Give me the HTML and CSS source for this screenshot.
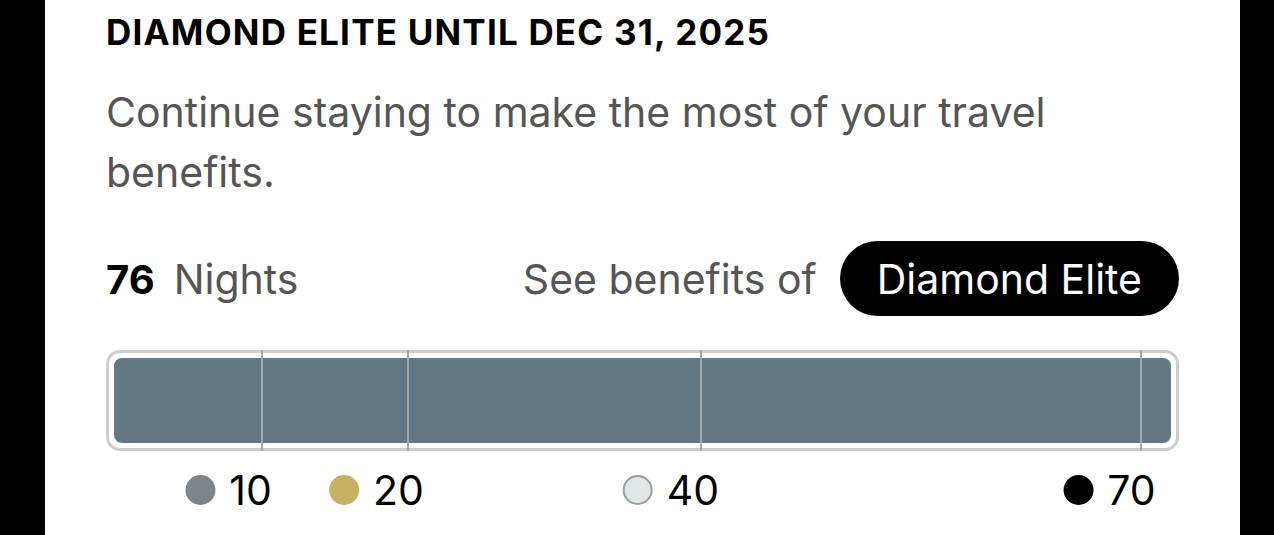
FILE: index.html
```html
<!DOCTYPE html>
<html lang="en">
<head>
<meta charset="utf-8">
<title>Diamond Elite</title>
<link rel="stylesheet" href="styles.css">
</head>
<body>
<main class="panel">
  <h1 class="status-title">DIAMOND ELITE UNTIL DEC 31, 2025</h1>
  <p class="status-text">Continue staying to make the most of your travel benefits.</p>
  <div class="nights-row">
    <div class="nights"><span class="nights-count">76</span><span class="nights-label">Nights</span></div>
    <div class="benefits">
      <span class="benefits-label">See benefits of</span>
      <span class="tier-pill">Diamond Elite</span>
    </div>
  </div>
  <div class="progress">
    <div class="progress-fill"></div>
    <span class="tick" style="left: 14.25%"></span>
    <span class="tick" style="left: 27.93%"></span>
    <span class="tick" style="left: 55.39%"></span>
    <span class="tick" style="left: 96.63%"></span>
  </div>
  <div class="legend">
    <span class="legend-item" style="left: 15.45%"><i class="dot dot-silver"></i>10</span>
    <span class="legend-item" style="left: 29.63%"><i class="dot dot-gold"></i>20</span>
    <span class="legend-item" style="left: 57.14%"><i class="dot dot-platinum"></i>40</span>
    <span class="legend-item" style="left: 97.83%"><i class="dot dot-diamond"></i>70</span>
  </div>
</main>
</body>
</html>
```

FILE: styles.css
```css
* { box-sizing: border-box; }
html, body { margin: 0; padding: 0; }
body {
  background: #000;
  height: 535px;
  overflow: hidden;
  font-family: Inter, "Noto Sans", "Liberation Sans", sans-serif;
}
.panel {
  background: #fff;
  margin: 0 34px 0 45px;
  height: 535px;
  padding: 12px 61px 0 61px;
}
.status-title {
  margin: 0;
  font-size: 35px;
  font-weight: 700;
  line-height: 40px;
  color: #000;
  letter-spacing: 1.2px;
}
.status-text {
  margin: 30px 0 0;
  font-size: 41px;
  line-height: 60px;
  color: #555;
  max-width: 1000px;
}
.nights-row {
  margin-top: 39px;
  display: flex;
  align-items: center;
  justify-content: space-between;
  height: 75px;
}
.nights { display: flex; align-items: baseline; gap: 19px; }
.nights-count { font-size: 40px; font-weight: 700; color: #000; }
.nights-label { font-size: 41px; color: #555; }
.benefits { display: flex; align-items: center; gap: 23px; }
.benefits-label { font-size: 41px; color: #555; }
.tier-pill {
  background: #000;
  color: #fff;
  height: 75px;
  border-radius: 38px;
  padding: 0 37px;
  display: flex;
  align-items: center;
  font-size: 41px;
}
.progress {
  position: relative;
  margin-top: 34px;
  height: 101px;
  border: 3px solid #cdcdcd;
  border-radius: 14px;
  padding: 5px;
}
.progress-fill {
  height: 100%;
  background: #627884;
  border-radius: 8px;
}
.tick {
  position: absolute;
  top: -3px;
  bottom: -3px;
  width: 2px;
  background: #a2a9ad;
}
.legend {
  position: relative;
  height: 80px;
}
.legend-item {
  position: absolute;
  top: 19px;
  transform: translateX(-100%);
  display: flex;
  align-items: center;
  gap: 14px;
  font-size: 41px;
  line-height: 40px;
  color: #000;
  white-space: nowrap;
}
.dot {
  display: inline-block;
  width: 30px;
  height: 30px;
  border-radius: 50%;
}
.dot-silver { background: #7f8489; }
.dot-gold { background: #c6b061; }
.dot-platinum { background: #e1e6e9; border: 2px solid #9a9c9e; }
.dot-diamond { background: #000; }
```
